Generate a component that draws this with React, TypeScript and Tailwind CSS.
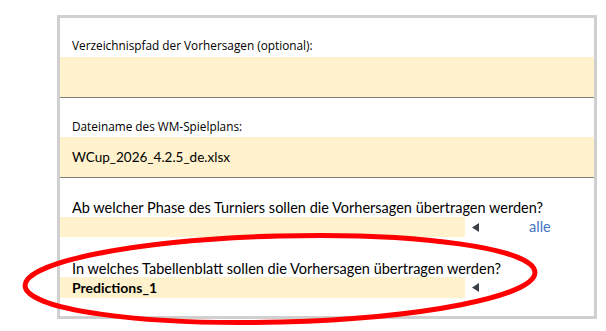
export default function App() {
  const calibri = { fontFamily: "Lato, 'Open Sans', sans-serif" }
  return (
    <div className="relative w-[606px] h-[331px] bg-white overflow-hidden">
      <div className="ml-[57px] mt-[15px] w-[540px] h-[304px] border-[3px] border-[#d0d0d0] flex flex-col text-black">
        {/* Verzeichnispfad */}
        <div className="h-[39px] flex items-end pb-[5px] pl-[12px] text-[11.8px] leading-[14px] font-['Open_Sans',sans-serif]">
          Verzeichnispfad der Vorhersagen (optional):
        </div>
        <div className="h-[41px] bg-[#fff2cc] border-b border-[#7f7f7f]" />

        {/* Spielplan */}
        <div className="h-[39px] flex items-end pb-[4px] pl-[12px] text-[11.8px] leading-[14px] font-['Open_Sans',sans-serif]">
          Dateiname des WM-Spielplans:
        </div>
        <div
          className="h-[41px] bg-[#fff2cc] border-b border-[#7f7f7f] flex items-center pl-[12px] text-[13.5px]"
          style={calibri}
        >
          WCup_2026_4.2.5_de.xlsx
        </div>

        {/* Phase */}
        <div className="h-[39px] flex items-end pb-[1px] pl-[12px] text-[14.5px] leading-[17px]" style={calibri}>
          Ab welcher Phase des Turniers sollen die Vorhersagen übertragen werden?
        </div>
        <div className="h-[20px] flex items-center">
          <div className="w-[405px] h-full bg-[#fff2cc]" />
          <svg width="7" height="9" viewBox="0 0 7 9" className="ml-[7px]">
            <polygon points="0,4.5 7,0 7,9" fill="#3b3f48" />
          </svg>
          <span className="ml-[50px] text-[14.5px] text-[#4472c4]" style={calibri}>
            alle
          </span>
        </div>

        {/* Tabellenblatt */}
        <div className="h-[40px] flex items-end pl-[12px] text-[14.5px] leading-[17px]" style={calibri}>
          In welches Tabellenblatt sollen die Vorhersagen übertragen werden?
        </div>
        <div className="h-[21px] flex items-center">
          <div
            className="w-[405px] h-full bg-[#fff2cc] flex items-center pl-[12px] text-[14px] font-bold"
            style={calibri}
          >
            Predictions_1
          </div>
          <svg width="7" height="9" viewBox="0 0 7 9" className="ml-[7px]">
            <polygon points="0,4.5 7,0 7,9" fill="#3b3f48" />
          </svg>
        </div>
      </div>

      {/* red marker ellipse */}
      <svg className="absolute inset-0 pointer-events-none" width="606" height="331">
        <ellipse cx="280" cy="279" rx="255" ry="43" fill="none" stroke="#ff0000" strokeWidth="5" transform="rotate(-1.5 280 279)" />
      </svg>
    </div>
  )
}
